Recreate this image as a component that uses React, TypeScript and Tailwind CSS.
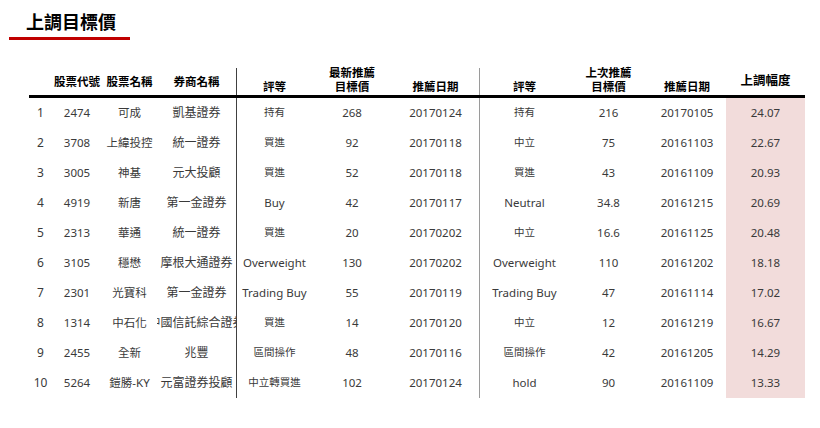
const rows = [
  ['1', '2474', '可成', '凱基證券', '持有', '268', '20170124', '持有', '216', '20170105', '24.07'],
  ['2', '3708', '上緯投控', '統一證券', '買進', '92', '20170118', '中立', '75', '20161103', '22.67'],
  ['3', '3005', '神基', '元大投顧', '買進', '52', '20170118', '買進', '43', '20161109', '20.93'],
  ['4', '4919', '新唐', '第一金證券', 'Buy', '42', '20170117', 'Neutral', '34.8', '20161215', '20.69'],
  ['5', '2313', '華通', '統一證券', '買進', '20', '20170202', '中立', '16.6', '20161125', '20.48'],
  ['6', '3105', '穩懋', '摩根大通證券', 'Overweight', '130', '20170202', 'Overweight', '110', '20161202', '18.18'],
  ['7', '2301', '光寶科', '第一金證券', 'Trading Buy', '55', '20170119', 'Trading Buy', '47', '20161114', '17.02'],
  ['8', '1314', '中石化', '中國信託綜合證券', '買進', '14', '20170120', '中立', '12', '20161219', '16.67'],
  ['9', '2455', '全新', '兆豐', '區間操作', '48', '20170116', '區間操作', '42', '20161205', '14.29'],
  ['10', '5264', '鎧勝-KY', '元富證券投顧', '中立轉買進', '102', '20170124', 'hold', '90', '20161109', '13.33'],
]

const isCjk = (s: string) => /^[\u4e00-\u9fff]+$/.test(s)

function Rating({ text, divider }: { text: string; divider: string }) {
  return (
    <div className={`h-[30px] flex items-center justify-center border-l ${divider}`}>
      <span className={isCjk(text) ? 'text-[10.5px]' : 'text-[11.5px]'}>{text}</span>
    </div>
  )
}

function Cell({ children, className = '' }: { children: React.ReactNode; className?: string }) {
  return <div className={`h-[30px] flex items-center justify-center whitespace-nowrap ${className}`}>{children}</div>
}

export default function App() {
  return (
    <div
      className="w-[820px] h-[428px] bg-white overflow-hidden"
      style={{ fontFamily: '"Noto Sans", "Noto Sans CJK TC", sans-serif' }}
    >
      <div className="pl-[26px] pt-[10px] text-[18px] font-bold leading-[24px] text-black">上調目標價</div>
      <div className="ml-[9px] mt-[3px] w-[121px] h-[3px] bg-[#c00000]" />

      <div className="ml-[29px] mt-[28px] w-[776px] grid grid-cols-[23px_50px_55px_79px_76px_80px_87px_90px_79px_78px_79px] text-[#3a3a3a]">
        {/* header */}
        <div className="h-[27px]" />
        <div className="h-[27px] flex items-center justify-center text-[11.5px] font-bold text-black whitespace-nowrap">股票代號</div>
        <div className="h-[27px] flex items-center justify-center text-[11.5px] font-bold text-black whitespace-nowrap">股票名稱</div>
        <div className="h-[27px] flex items-center justify-center text-[11.5px] font-bold text-black whitespace-nowrap">券商名稱</div>
        <div className="h-[27px] flex items-end justify-center pb-[1px] border-l border-[#404040] text-[11.5px] font-bold text-black leading-[14px]">評等</div>
        <div className="h-[27px] flex flex-col items-center justify-end pb-[1px] text-[11.5px] font-bold text-black leading-[14px]">
          <span>最新推薦</span>
          <span>目標價</span>
        </div>
        <div className="h-[27px] flex items-end justify-center pb-[1px] text-[11.5px] font-bold text-black leading-[14px]">推薦日期</div>
        <div className="h-[27px] flex items-end justify-center pb-[1px] border-l border-[#9a9a9a] text-[11.5px] font-bold text-black leading-[14px]">評等</div>
        <div className="h-[27px] flex flex-col items-center justify-end pb-[1px] text-[11.5px] font-bold text-black leading-[14px]">
          <span>上次推薦</span>
          <span>目標價</span>
        </div>
        <div className="h-[27px] flex items-end justify-center pb-[1px] text-[11.5px] font-bold text-black leading-[14px]">推薦日期</div>
        <div className="h-[27px] flex items-center justify-center text-[12.5px] font-bold text-black">上調幅度</div>

        <div className="col-span-11 h-[3px] bg-black" />

        {rows.map((r) => (
          <div key={r[0]} className="contents">
            <Cell className="text-[12px]">{r[0]}</Cell>
            <Cell className="text-[11.5px]">{r[1]}</Cell>
            <Cell className="text-[11.5px]">{r[2]}</Cell>
            <Cell className="text-[12px] overflow-hidden">{r[3]}</Cell>
            <Rating text={r[4]} divider="border-[#404040]" />
            <Cell className="text-[11.5px]">{r[5]}</Cell>
            <Cell className="text-[11.5px]">{r[6]}</Cell>
            <Rating text={r[7]} divider="border-[#9a9a9a]" />
            <Cell className="text-[11.5px]">{r[8]}</Cell>
            <Cell className="text-[11.5px]">{r[9]}</Cell>
            <Cell className="text-[11.5px] bg-[#f2dcdb]">{r[10]}</Cell>
          </div>
        ))}
      </div>
    </div>
  )
}
